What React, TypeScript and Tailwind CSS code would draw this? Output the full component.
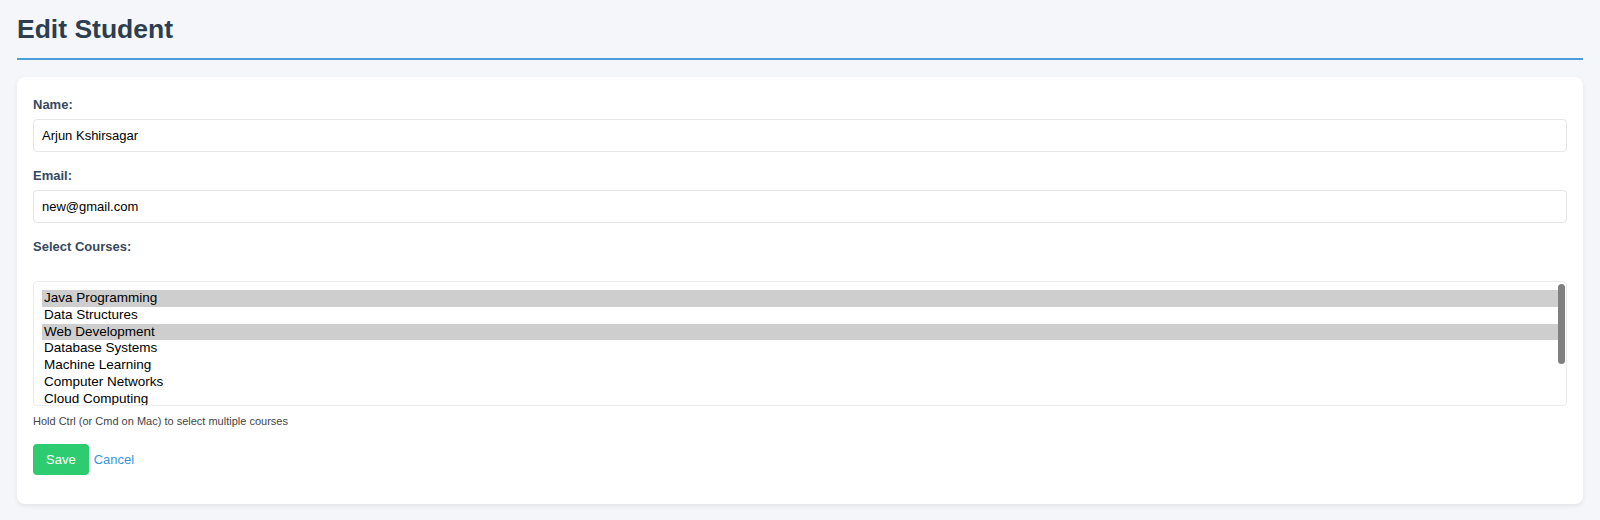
import React, { useState } from "react";

const courses = [
  "Java Programming",
  "Data Structures",
  "Web Development",
  "Database Systems",
  "Machine Learning",
  "Computer Networks",
  "Cloud Computing",
  "Cyber Security",
  "Operating Systems",
];

function App() {
  const [name, setName] = useState("Arjun Kshirsagar");
  const [email, setEmail] = useState("new@gmail.com");
  const [selected, setSelected] = useState<string[]>([
    "Java Programming",
    "Web Development",
  ]);

  const toggleCourse = (course: string) => {
    setSelected((prev) =>
      prev.includes(course)
        ? prev.filter((c) => c !== course)
        : [...prev, course]
    );
  };

  return (
    <div
      className="min-h-screen w-full bg-[#f5f6fa] px-[17px] pt-[14px]"
      style={{ fontFamily: '"Liberation Sans", Arial, sans-serif' }}
    >
      {/* Header */}
      <h1 className="border-b-2 border-[#4a9fdb] pb-[14px] text-[26.5px] font-bold leading-[30px] text-[#2c3e50]">
        Edit Student
      </h1>

      {/* Card */}
      <div className="mt-[17px] rounded-lg bg-white px-4 pt-5 pb-[29px] shadow-[0_2px_5px_rgba(0,0,0,0.08)]">
        <form className="flex flex-col" onSubmit={(e) => e.preventDefault()}>
          <label className="text-[13px] font-bold leading-[15px] text-[#34495e]">
            Name:
          </label>
          <input
            type="text"
            value={name}
            onChange={(e) => setName(e.target.value)}
            className="mt-[7px] h-[33px] w-full rounded border border-[#e6e6e6] px-2 text-[13px] text-black outline-none"
          />

          <label className="mt-4 text-[13px] font-bold leading-[15px] text-[#34495e]">
            Email:
          </label>
          <input
            type="email"
            value={email}
            onChange={(e) => setEmail(e.target.value)}
            className="mt-[7px] h-[33px] w-full rounded border border-[#e6e6e6] px-2 text-[13px] text-black outline-none"
          />

          <label className="mt-4 text-[13px] font-bold leading-[15px] text-[#34495e]">
            Select Courses:
          </label>

          {/* Course list */}
          <div className="relative mt-[27px] h-[125px] w-full overflow-hidden rounded border border-[#ececec]">
            <div className="flex flex-col pt-2 pl-2 pr-[7px]">
              {courses.map((course) => (
                <div
                  key={course}
                  onClick={() => toggleCourse(course)}
                  className={
                    selected.includes(course)
                      ? "h-[16.8px] cursor-default bg-[#cecece] pl-[2px] text-[13.5px] leading-[16.8px] text-black"
                      : "h-[16.8px] cursor-default pl-[2px] text-[13.5px] leading-[16.8px] text-black"
                  }
                >
                  {course}
                </div>
              ))}
            </div>
            <div className="absolute top-[2px] right-[1px] h-[80px] w-[7px] rounded-full bg-[#808080]" />
          </div>

          <p className="mt-[9px] text-[11px] leading-[13px] text-[#444]">
            Hold Ctrl (or Cmd on Mac) to select multiple courses
          </p>

          <div className="mt-4 flex items-center gap-[5px]">
            <button
              type="submit"
              className="h-[31px] rounded bg-[#2ecc71] px-[13px] text-[13px] text-white"
            >
              Save
            </button>
            <a href="#" className="text-[13px] text-[#3498db]">
              Cancel
            </a>
          </div>
        </form>
      </div>
    </div>
  );
}

export default App;
